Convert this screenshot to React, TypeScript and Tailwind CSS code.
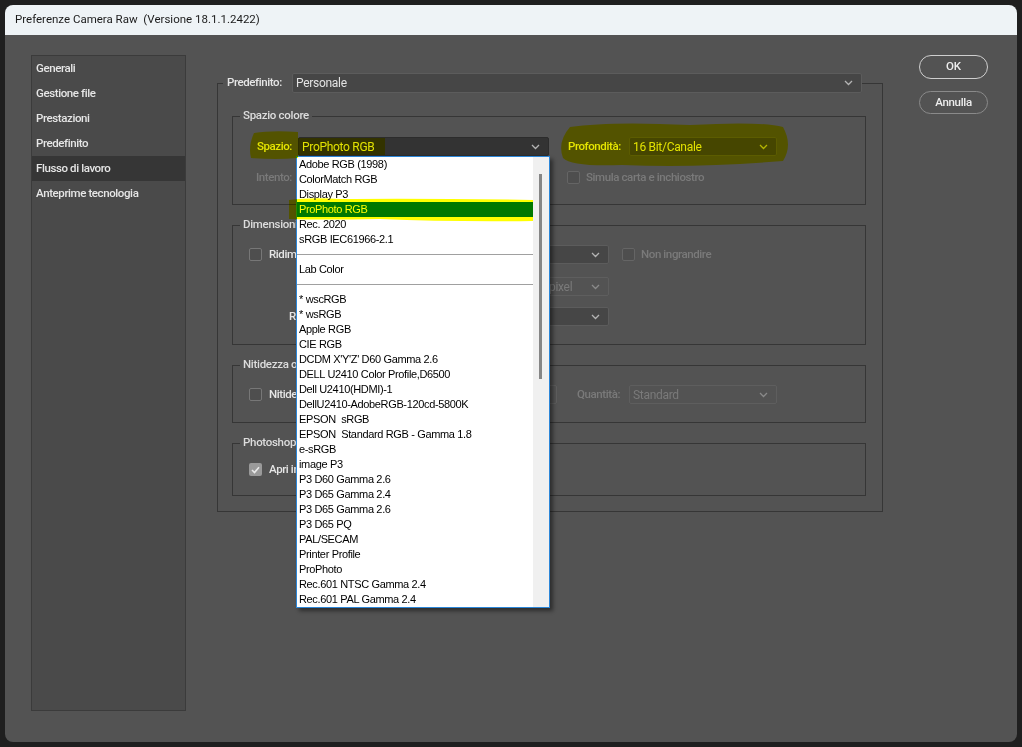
import React from "react";

const ITEMS: (string | null)[] = [
  "Adobe RGB (1998)",
  "ColorMatch RGB",
  "Display P3",
  "ProPhoto RGB",
  "Rec. 2020",
  "sRGB IEC61966-2.1",
  null,
  "Lab Color",
  null,
  "* wscRGB",
  "* wsRGB",
  "Apple RGB",
  "CIE RGB",
  "DCDM X'Y'Z' D60 Gamma 2.6",
  "DELL U2410 Color Profile,D6500",
  "Dell U2410(HDMI)-1",
  "DellU2410-AdobeRGB-120cd-5800K",
  "EPSON  sRGB",
  "EPSON  Standard RGB - Gamma 1.8",
  "e-sRGB",
  "image P3",
  "P3 D60 Gamma 2.6",
  "P3 D65 Gamma 2.4",
  "P3 D65 Gamma 2.6",
  "P3 D65 PQ",
  "PAL/SECAM",
  "Printer Profile",
  "ProPhoto",
  "Rec.601 NTSC Gamma 2.4",
  "Rec.601 PAL Gamma 2.4",
];

const SIDEBAR = ["Generali", "Gestione file", "Prestazioni", "Predefinito", "Flusso di lavoro", "Anteprime tecnologia"];

function Chevron({ dim }: { dim?: boolean }) {
  return (
    <svg width="9" height="6" viewBox="0 0 9 6" className="shrink-0">
      <path d="M1 1 L4.5 4.5 L8 1" fill="none" stroke={dim ? "#8a8a8a" : "#b4b4b4"} strokeWidth="1.3" />
    </svg>
  );
}

function Dropdown({ className, text, textClass, pad, dim }: { className: string; text?: string; textClass?: string; pad?: string; dim?: boolean }) {
  return (
    <div className={`flex items-center justify-between rounded-[2px] border pr-[8px] ${className}`}>
      <span className={`whitespace-pre text-[12px] font-normal tracking-[-0.3px] ${pad ?? "pl-[3px]"} ${textClass ?? "text-[#e2e2e2]"}`}>{text}</span>
      <Chevron dim={dim} />
    </div>
  );
}

function Checkbox({ checked, dim }: { checked?: boolean; dim?: boolean }) {
  if (checked) {
    return (
      <div className="flex h-[13px] w-[13px] shrink-0 items-center justify-center rounded-[2px] bg-[#9a9a9a]">
        <svg width="9" height="8" viewBox="0 0 9 8">
          <path d="M1 4 L3.5 6.5 L8 1.2" fill="none" stroke="#e9e9e9" strokeWidth="1.6" />
        </svg>
      </div>
    );
  }
  return (
    <div className={`h-[13px] w-[13px] shrink-0 rounded-[2px] border ${dim ? "border-[#656565]" : "border-[#777777]"} bg-[#4e4e4e]`} />
  );
}

function Group({ title, className, children }: { title: string; className: string; children: React.ReactNode }) {
  return (
    <div className={`ml-[14px] w-[634px] border border-[#363636] ${className}`}>
      <div className="-mt-[9px] flex h-[16px] items-center pl-[7px]">
        <span className="bg-[#535353] px-[3px] text-[11.5px] font-medium tracking-[-0.3px] text-[#dddddd]">{title}</span>
      </div>
      {children}
    </div>
  );
}

function Popup() {
  return (
    <div className="absolute left-[296px] top-[156px] flex h-[452px] w-[254px] border border-[#2b86d8] bg-white shadow-[3px_3px_4px_rgba(0,0,0,0.45)]">
      <div className="flex w-[236px] flex-col font-['Liberation_Sans',Arial,sans-serif] text-[11px] tracking-[-0.35px] text-black">
        {ITEMS.map((item, i) =>
          item === null ? (
            <div key={i} className="flex h-[15px] items-center">
              <div className="h-px w-full bg-[#a0a0a0]" />
            </div>
          ) : (
            <div
              key={i}
              className={`h-[15px] whitespace-pre pl-[2px] leading-[15px] ${item === "ProPhoto RGB" ? "bg-[#0078d7] text-white" : ""}`}
            >
              {item}
            </div>
          )
        )}
      </div>
      <div className="w-[16px] bg-[#f0f0f0]">
        <div className="ml-[6px] mt-[17px] h-[205px] w-[3px] bg-[#868686]" />
      </div>
    </div>
  );
}

function Marker() {
  return (
    <svg width="1022" height="747" viewBox="0 0 1022 747" className="pointer-events-none absolute left-0 top-0 mix-blend-multiply">
      <path d="M254 133 Q272 130 298 132 L298 158 Q276 160 251 158 Q248 146 254 133 Z" fill="#ffff00" />
      <rect x="298" y="138" width="87" height="17" fill="#ffff00" />
      <path d="M570 127 Q610 121 690 125 Q760 121 783 127 Q793 145 783 161 Q700 168 622 165 Q572 167 563 158 Q557 142 570 127 Z" fill="#ffff00" />
      <path d="M289 200 Q310 197 340 199 Q420 198 533 200 L533 221 Q450 222 380 219 Q320 220 289 219 Z" fill="#ffff00" />
    </svg>
  );
}

export default function App() {
  return (
    <div className="relative h-[747px] w-[1022px] overflow-hidden bg-[#1f1f1f] pl-[5px] pt-[5px] font-['Roboto',sans-serif]">
      <div className="flex h-[737px] w-[1012px] flex-col overflow-hidden rounded-[8px]">
        {/* Title bar */}
        <div className="flex h-[30px] items-center bg-[#eef3f6] pl-[10px]">
          <span className="whitespace-pre text-[11.5px] text-[#1b1b1b]">Preferenze Camera Raw  (Versione 18.1.1.2422)</span>
        </div>

        {/* Body */}
        <div className="flex flex-1 bg-[#535353] pl-[26px] pt-[20px]">
          {/* Sidebar */}
          <div className="h-[656px] w-[155px] border border-[#3b3b3b] bg-[#4a4a4a]">
            {SIDEBAR.map((s) => (
              <div
                key={s}
                className={`flex h-[25px] items-center pl-[4px] text-[11.5px] font-medium tracking-[-0.4px] text-[#e6e6e6] ${s === "Flusso di lavoro" ? "bg-[#363636]" : ""}`}
              >
                {s}
              </div>
            ))}
          </div>

          {/* Main frame */}
          <div className="ml-[31px] mt-[28px] h-[429px] w-[666px] border border-[#363636] text-[11.5px] font-medium tracking-[-0.4px]">
            <div className="-mt-[11px] flex h-[20px] items-center pl-[5px]">
              <div className="flex h-[20px] w-[69px] items-center bg-[#535353] pl-[4px] text-[#e6e6e6]">Predefinito:</div>
              <Dropdown className="h-[20px] w-[570px] border-[#5c5c5c] bg-[#464646]" text="Personale" />
            </div>

            <Group title="Spazio colore" className="mt-[23px] h-[89px]">
              <div className="mt-[13px] flex h-[19px] items-center">
                <div className="w-[59px] text-right text-[#e6e6e6]">Spazio:</div>
                <Dropdown className="ml-[6px] h-[19px] w-[251px] border-[#2c2c2c] bg-[#333333]" text="ProPhoto RGB" />
                <div className="ml-[19px] w-[61px] text-[#e6e6e6]">Profondità:</div>
                <Dropdown className="h-[19px] w-[148px] border-[#5c5c5c] bg-[#464646]" text="16 Bit/Canale" />
              </div>
              <div className="mt-[12px] flex h-[19px] items-center">
                <div className="w-[59px] text-right text-[#7a7a7a]">Intento:</div>
                <Dropdown className="ml-[6px] h-[19px] w-[251px] border-[#5e5e5e] bg-[#535353]" dim />
                <div className="ml-[18px]">
                  <Checkbox dim />
                </div>
                <span className="ml-[6px] text-[#7a7a7a]">Simula carta e inchiostro</span>
              </div>
            </Group>

            <Group title="Dimensioni immagine" className="mt-[20px] h-[120px]">
              <div className="mt-[12px] flex h-[19px] items-center pl-[16px]">
                <Checkbox />
                <div className="ml-[7px] w-[161px] text-[#e6e6e6]">Ridimensiona per adattare:</div>
                <Dropdown className="h-[19px] w-[179px] border-[#5c5c5c] bg-[#464646]" />
                <div className="ml-[13px]">
                  <Checkbox dim />
                </div>
                <span className="ml-[6px] text-[#7a7a7a]">Non ingrandire</span>
              </div>
              <div className="mt-[13px] flex h-[19px] items-center">
                <Dropdown className="ml-[287px] h-[19px] w-[89px] border-[#5e5e5e] bg-[#535353]" text="pixel" pad="pl-[28px]" textClass="text-[#7a7a7a]" dim />
              </div>
              <div className="mt-[11px] flex h-[19px] items-center pl-[56px]">
                <div className="w-[141px] text-[#e6e6e6]">Risoluzione:</div>
                <Dropdown className="h-[19px] w-[179px] border-[#5c5c5c] bg-[#464646]" />
              </div>
            </Group>

            <Group title="Nitidezza output" className="mt-[20px] h-[58px]">
              <div className="mt-[12px] flex h-[19px] items-center pl-[16px]">
                <Checkbox />
                <div className="ml-[7px] w-[111px] text-[#e6e6e6]">Nitidezza per:</div>
                <Dropdown className="h-[19px] w-[177px] border-[#5e5e5e] bg-[#535353]" dim />
                <div className="ml-[20px] w-[52px] text-[#7a7a7a]">Quantità:</div>
                <Dropdown className="h-[19px] w-[148px] border-[#5e5e5e] bg-[#535353]" text="Standard" textClass="text-[#7a7a7a]" dim />
              </div>
            </Group>

            <Group title="Photoshop" className="mt-[20px] h-[53px]">
              <div className="mt-[9px] flex h-[19px] items-center pl-[16px]">
                <Checkbox checked />
                <span className="ml-[7px] text-[#e6e6e6]">Apri in Photoshop come oggetti avanzati</span>
              </div>
            </Group>
          </div>

          {/* Buttons */}
          <div className="ml-[36px] flex w-[69px] flex-col">
            <button className="h-[24px] w-[69px] rounded-full border-[1.5px] border-[#cfcfcf] text-[11.5px] font-medium text-[#ededed]">OK</button>
            <button className="mt-[12px] h-[23px] w-[69px] rounded-full border-[1.5px] border-[#8a8a8a] text-[11.5px] font-medium tracking-[-0.3px] text-[#ededed]">Annulla</button>
          </div>
        </div>
      </div>

      <Popup />
      <Marker />
    </div>
  );
}
